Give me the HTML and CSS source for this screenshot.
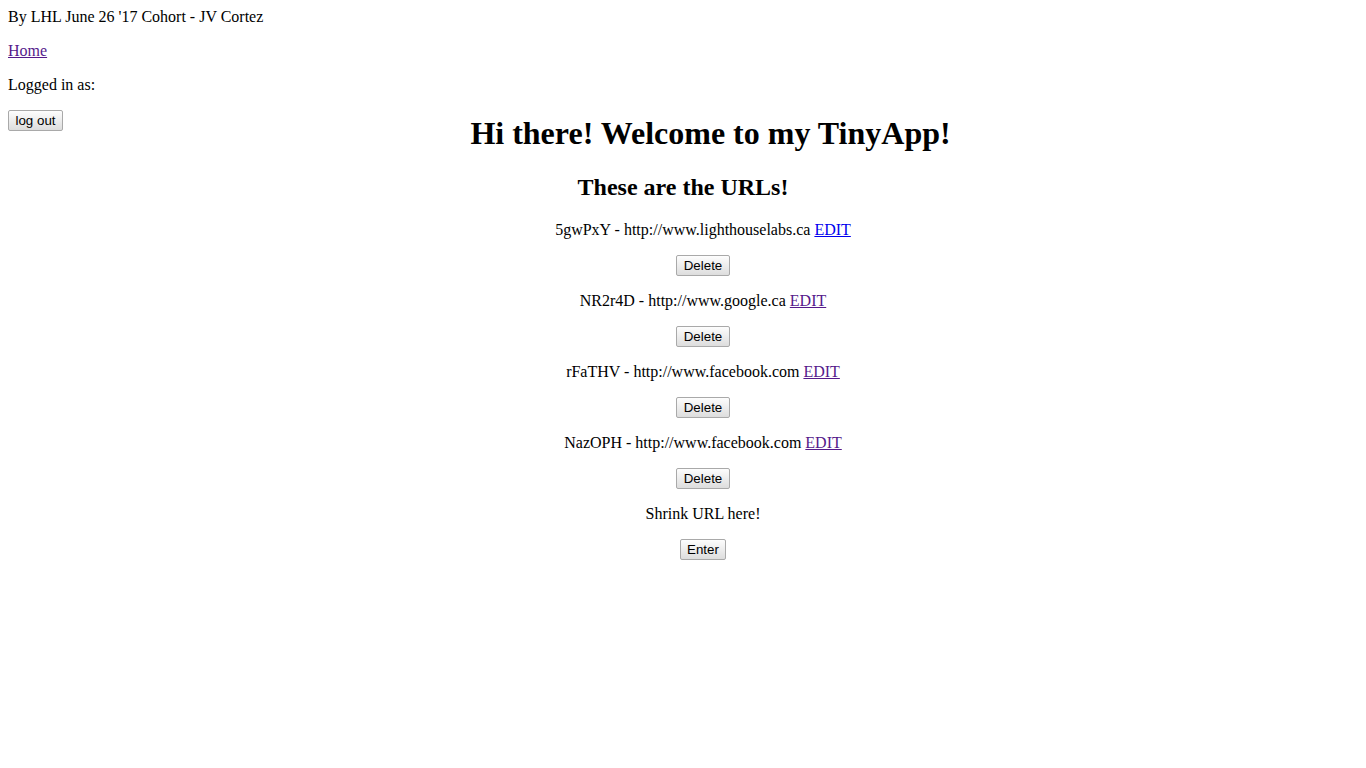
FILE: index.html
```html
<!DOCTYPE html>
<html>
<head>
<meta charset="utf-8">
<title>TinyApp</title>
<link rel="stylesheet" href="styles.css">
</head>
<body>
<p class="first">By LHL June 26 '17 Cohort - JV Cortez</p>
<p><a class="visited" href="#">Home</a></p>
<p>Logged in as: </p>
<form class="logout-form"><button class="btn" type="button">log out</button></form>
<h1 class="title">Hi there! Welcome to my TinyApp!</h1>
<h2 class="title">These are the URLs!</h2>
<ul class="urls">
  <li>
    <p>5gwPxY - http://www.lighthouselabs.ca <a class="link" href="#">EDIT</a></p>
    <p><button class="btn" type="button">Delete</button></p>
  </li>
  <li>
    <p>NR2r4D - http://www.google.ca <a class="visited" href="#">EDIT</a></p>
    <p><button class="btn" type="button">Delete</button></p>
  </li>
  <li>
    <p>rFaTHV - http://www.facebook.com <a class="visited" href="#">EDIT</a></p>
    <p><button class="btn" type="button">Delete</button></p>
  </li>
  <li>
    <p>NazOPH - http://www.facebook.com <a class="visited" href="#">EDIT</a></p>
    <p><button class="btn" type="button">Delete</button></p>
  </li>
  <li>
    <p>Shrink URL here!</p>
    <p><button class="btn" type="button">Enter</button></p>
  </li>
</ul>
</body>
</html>
```
FILE: styles.css
```css
body {
  margin: 8px;
  font-family: "Liberation Serif", "Times New Roman", serif;
  font-size: 16px;
  color: #000;
  background: #fff;
}
.first { margin-top: 0; }
.visited { color: #551a8b; }
.link { color: #0000ee; }
.logout-form { margin: 0; }
.logout-form .btn { float: left; }
.title { text-align: center; }
.urls {
  list-style: none;
  padding-left: 40px;
  text-align: center;
}
.btn {
  font-family: "Liberation Sans", Arial, sans-serif;
  font-size: 13.333px;
  line-height: normal;
  color: #000;
  padding: 2px 6.5px;
  margin: 0;
  border: 1px solid #a9a9a9;
  border-radius: 2px;
  background: linear-gradient(#fdfdfd, #dddddd);
}
```
